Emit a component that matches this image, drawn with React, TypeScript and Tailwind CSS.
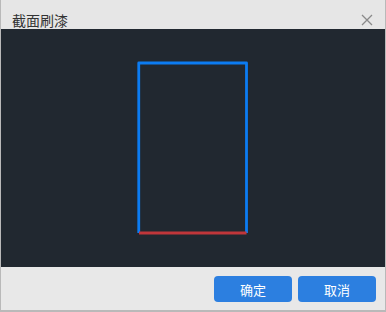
export default function App() {
  return (
    <div className="w-[386px] h-[312px] flex flex-col border-x border-b-2 border-[#b9b9b9] bg-[#e8e8e8]" style={{ fontFamily: '"Noto Sans CJK SC", "Noto Sans", sans-serif' }}>
      <div className="h-[29px] shrink-0 flex items-start justify-between pl-[11px] pr-[12px] pt-[10px] bg-[#e6e6e6]">
        <span className="text-[14px] leading-5 text-[#333333]">截面刷漆</span>
        <svg width="12" height="12" viewBox="0 0 12 12" className="mt-[4px]">
          <path d="M1 1 L11 11 M11 1 L1 11" stroke="#8a8a8a" strokeWidth="1.3" fill="none" />
        </svg>
      </div>
      <div className="h-[238px] shrink-0 bg-[#212830]">
        <svg width="384" height="238" viewBox="0 0 384 238">
          <path d="M137.75 204 L137.75 34 L245.5 34 L245.5 204" stroke="#0c7cf2" strokeWidth="2.8" fill="none" strokeLinejoin="round" />
          <line x1="138" y1="204" x2="245.5" y2="204" stroke="#c0363a" strokeWidth="2.8" />
        </svg>
      </div>
      <div className="flex-1 flex justify-end items-start gap-[6px] pt-[9px] pr-[9px] bg-[#e8e8e8]">
        <button className="w-[78px] h-[26px] rounded-[4px] bg-[#2c7fe0] text-white text-[13px] leading-none">确定</button>
        <button className="w-[78px] h-[26px] rounded-[4px] bg-[#2c7fe0] text-white text-[13px] leading-none">取消</button>
      </div>
    </div>
  );
}
